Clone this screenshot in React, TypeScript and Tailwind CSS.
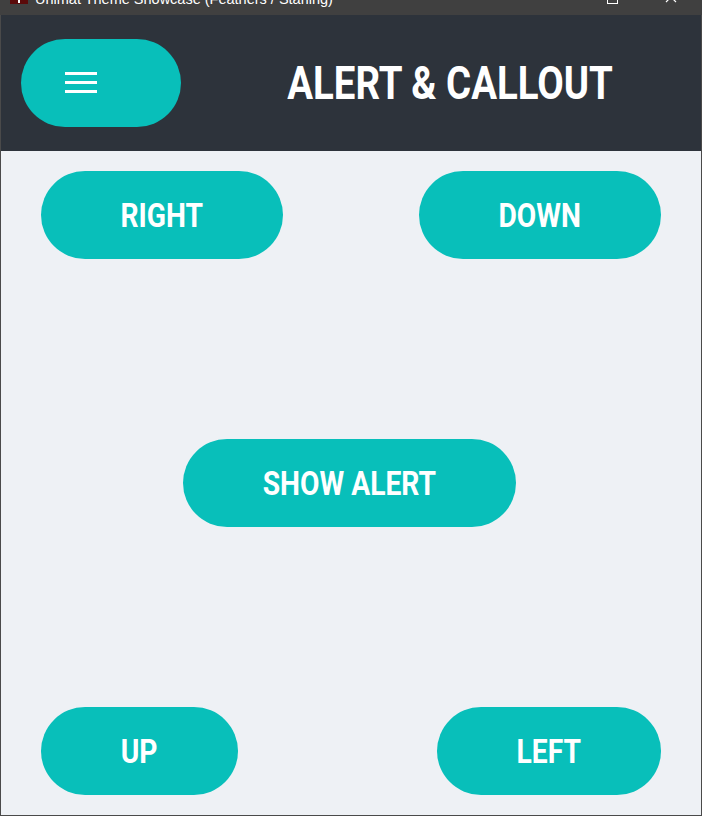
import React from "react";

const Pill = ({ label, className }: { label: string; className: string }) => (
  <button
    className={`flex h-[88px] items-center justify-center rounded-full bg-[#08bfba] text-white ${className}`}
  >
    <span
      className="inline-block origin-center scale-x-[0.83] text-[34px] font-bold leading-none"
      style={{ fontFamily: "Roboto, 'Liberation Sans', sans-serif" }}
    >
      {label}
    </span>
  </button>
);

export default function App() {
  return (
    <div className="h-[839px] w-[702px] bg-white" style={{ fontFamily: "Roboto, sans-serif" }}>
      <div className="flex h-[816px] w-[702px] flex-col border-x border-b border-[#4a4a4a]">
        {/* window title bar */}
        <div className="relative -mx-px h-[15px] shrink-0 overflow-hidden bg-[#404040]">
          <div className="absolute left-[10px] top-[-10px] flex h-[14px] w-[18px] items-end justify-center bg-[#5a0a0a]">
            <div className="mb-[1px] h-[3px] w-[2px] bg-white" />
          </div>
          <div
            className="absolute left-[35px] top-[-8px] whitespace-nowrap text-[14.5px] leading-[15px] text-white"
            style={{ fontFamily: "'Liberation Sans', sans-serif" }}
          >
            Unimat Theme Showcase (Feathers / Starling)
          </div>
          <div className="absolute left-[607px] top-[-7px] h-[11px] w-[11px] border border-white" />
          <svg className="absolute left-[665px] top-[-9px]" width="12" height="12" viewBox="0 0 12 12">
            <path d="M1 1L11 11M11 1L1 11" stroke="white" strokeWidth="1.2" />
          </svg>
        </div>
        {/* header */}
        <div className="flex h-[136px] shrink-0 items-center bg-[#2d333b] pl-[20px]">
          <button className="flex h-[88px] w-[160px] items-center justify-start rounded-full bg-[#08bfba] pl-[44px]">
            <svg width="32" height="22" viewBox="0 0 32 22">
              <rect x="0" y="0" width="32" height="3" fill="white" />
              <rect x="0" y="9" width="32" height="3" fill="white" />
              <rect x="0" y="18" width="32" height="3" fill="white" />
            </svg>
          </button>
          <div className="flex flex-1 justify-center pl-[18px]">
            <span className="inline-block scale-x-[0.835] text-[46px] font-bold leading-none text-white">
              ALERT &amp; CALLOUT
            </span>
          </div>
        </div>
        {/* content */}
        <div className="flex flex-1 flex-col justify-between bg-[#eef1f5] px-[40px] pb-[20px] pt-[20px]">
          <div className="flex justify-between">
            <Pill label="RIGHT" className="w-[242px]" />
            <Pill label="DOWN" className="w-[242px]" />
          </div>
          <div className="flex justify-center pr-[3px]">
            <Pill label="SHOW ALERT" className="w-[333px]" />
          </div>
          <div className="flex justify-between">
            <Pill label="UP" className="w-[197px]" />
            <Pill label="LEFT" className="w-[224px]" />
          </div>
        </div>
      </div>
    </div>
  );
}
